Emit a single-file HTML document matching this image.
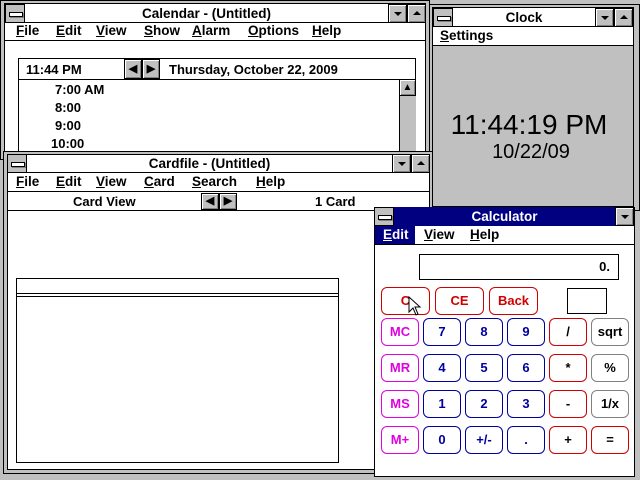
<!DOCTYPE html>
<html><head><style>
*{margin:0;padding:0;box-sizing:border-box}
body{width:640px;height:480px;background:#c0c0c0;position:relative;overflow:hidden;font-family:"Liberation Sans",sans-serif;font-weight:bold;font-size:13px;color:#000}
.a{position:absolute}
.w{background:#fff}
.b{border:1px solid #000}
.t{text-align:center;line-height:17px}
.btn{position:absolute;background:#c0c0c0;border:1px solid #000;box-shadow:inset 1px 1px #fff,inset -1px -1px #808080}
.tri{position:absolute;left:5px;width:0;height:0;border-left:4px solid transparent;border-right:4px solid transparent}
.dn{top:7px;border-top:4px solid #000}
.up{top:6px;border-bottom:4px solid #000}
.sys{position:absolute;background:#c0c0c0;border:1px solid #000}
.sys:after{content:"";position:absolute;left:3px;top:7px;width:12px;height:3px;background:#fff;border:1px solid #000;box-shadow:1px 1px #808080}
u{text-decoration:underline}
.m span{position:absolute;top:0;line-height:18px;font-weight:bold}
.k{position:absolute;width:38px;height:28px;border:1px solid;border-radius:6px;text-align:center;line-height:26px;font-size:13px;background:#fff}
.r{color:#d00000;border-color:#d00000}.bl{color:#0000a0;border-color:#0000a0}.p{color:#e000e0;border-color:#e000e0}.g{color:#000;border-color:#808080}
.ar{font-size:11px;text-align:center}
</style></head><body>

<!-- Calendar -->
<div class="a b" style="left:0;top:0;width:430px;height:160px;background:#c0c0c0"></div>
<div class="a b w" style="left:4px;top:3px;width:422px;height:150px"></div>
<div class="sys" style="left:5px;top:4px;width:20px;height:19px"></div>
<div class="a t" style="left:25px;top:4px;width:363px;height:19px;border-bottom:1px solid #000;line-height:19px;font-size:13.5px">Calendar - (Untitled)</div>
<div class="btn" style="left:388px;top:4px;width:19px;height:19px"><div class="tri dn"></div></div>
<div class="btn" style="left:407px;top:4px;width:19px;height:19px"><div class="tri up"></div></div>
<div class="a" style="left:4px;top:22px;width:422px;height:19px;border-bottom:1px solid #000"></div>
<div class="m a" style="left:0;top:22px;font-size:13.5px">
<span style="left:16px"><u>F</u>ile</span><span style="left:56px"><u>E</u>dit</span><span style="left:96px"><u>V</u>iew</span><span style="left:144px"><u>S</u>how</span><span style="left:192px"><u>A</u>larm</span><span style="left:248px"><u>O</u>ptions</span><span style="left:312px"><u>H</u>elp</span></div>
<div class="a b" style="left:18px;top:58px;width:398px;height:100px"></div>
<div class="a" style="left:19px;top:79px;width:396px;border-top:1px solid #000"></div>
<div class="a" style="left:26px;top:61px;line-height:17px">11:44 PM</div>
<div class="btn ar" style="left:124px;top:59px;width:18px;height:20px;line-height:18px">◀</div>
<div class="btn ar" style="left:142px;top:59px;width:18px;height:20px;line-height:18px">▶</div>
<div class="a" style="left:169px;top:61px;line-height:17px">Thursday, October 22, 2009</div>
<div class="a" style="left:399px;top:80px;width:17px;height:78px;background:#c0c0c0;border-left:1px solid #000"></div>
<div class="btn" style="left:399px;top:79px;width:17px;height:17px;font-size:10px;text-align:center;line-height:15px">▲</div>
<div class="a" style="left:55px;top:81px;line-height:17px">7:00 AM</div>
<div class="a" style="left:55px;top:99px;line-height:17px">8:00</div>
<div class="a" style="left:55px;top:117px;line-height:17px">9:00</div>
<div class="a" style="left:51px;top:135px;line-height:17px">10:00</div>

<!-- Clock -->
<div class="a b" style="left:429px;top:4px;width:211px;height:207px;background:#c0c0c0"></div>
<div class="a b" style="left:432px;top:7px;width:202px;height:200px"></div>
<div class="sys" style="left:433px;top:8px;width:20px;height:19px"></div>
<div class="a t w" style="left:453px;top:8px;width:142px;height:19px;border-bottom:1px solid #000;line-height:19px;font-size:13.5px">Clock</div>
<div class="btn" style="left:595px;top:8px;width:19px;height:19px"><div class="tri dn"></div></div>
<div class="btn" style="left:614px;top:8px;width:19px;height:19px"><div class="tri up"></div></div>
<div class="a w" style="left:433px;top:27px;width:200px;height:19px;border-bottom:1px solid #000;line-height:18px;padding-left:7px;font-size:13.5px"><u>S</u>ettings</div>
<div class="a" style="left:429px;top:108px;width:200px;text-align:center;font-weight:normal;font-size:28px;line-height:34px">11:44:19 PM</div>
<div class="a" style="left:431px;top:140px;width:200px;text-align:center;font-weight:normal;font-size:20px;line-height:24px">10/22/09</div>

<!-- Cardfile -->
<div class="a b" style="left:3px;top:151px;width:430px;height:323px;background:#c0c0c0"></div>
<div class="a b w" style="left:7px;top:154px;width:423px;height:316px"></div>
<div class="sys" style="left:7px;top:154px;width:20px;height:19px"></div>
<div class="a t" style="left:27px;top:154px;width:365px;height:19px;border-bottom:1px solid #000;line-height:19px;font-size:13.5px">Cardfile - (Untitled)</div>
<div class="btn" style="left:392px;top:154px;width:19px;height:19px"><div class="tri dn"></div></div>
<div class="btn" style="left:411px;top:154px;width:19px;height:19px"><div class="tri up"></div></div>
<div class="a" style="left:7px;top:173px;width:423px;height:19px;border-bottom:1px solid #000"></div>
<div class="m a" style="left:0;top:173px;font-size:13.5px">
<span style="left:16px"><u>F</u>ile</span><span style="left:56px"><u>E</u>dit</span><span style="left:96px"><u>V</u>iew</span><span style="left:144px"><u>C</u>ard</span><span style="left:192px"><u>S</u>earch</span><span style="left:256px"><u>H</u>elp</span></div>
<div class="a" style="left:7px;top:192px;width:423px;height:19px;border-bottom:1px solid #000"></div>
<div class="a" style="left:73px;top:193px;line-height:17px">Card View</div>
<div class="btn ar" style="left:201px;top:193px;width:18px;height:17px;line-height:15px">◀</div>
<div class="btn ar" style="left:219px;top:193px;width:18px;height:17px;line-height:15px">▶</div>
<div class="a" style="left:315px;top:193px;line-height:17px">1 Card</div>
<div class="a b" style="left:16px;top:278px;width:323px;height:185px"></div>
<div class="a" style="left:17px;top:293px;width:321px;height:4px;border-top:1px solid #000;border-bottom:1px solid #000"></div>

<!-- Calculator -->
<div class="a b w" style="left:374px;top:207px;width:261px;height:270px"></div>
<div class="sys" style="left:374px;top:207px;width:20px;height:19px"></div>
<div class="a t" style="left:394px;top:207px;width:221px;height:19px;background:#000080;color:#fff;line-height:19px;font-size:13.5px">Calculator</div>
<div class="btn" style="left:615px;top:207px;width:19px;height:19px"><div class="tri dn"></div></div>
<div class="a" style="left:375px;top:226px;width:259px;height:19px;border-bottom:1px solid #000"></div>
<div class="a" style="left:375px;top:226px;width:40px;height:18px;background:#000080"></div>
<div class="m a" style="left:0;top:226px;font-size:13.5px"><span style="left:383px;color:#fff"><u>E</u>dit</span><span style="left:424px"><u>V</u>iew</span><span style="left:470px"><u>H</u>elp</span></div>
<div class="a b" style="left:419px;top:254px;width:200px;height:26px;text-align:right;padding-right:8px;line-height:24px">0.</div>
<div class="a b" style="left:567px;top:288px;width:40px;height:26px"></div>
<div class="k r" style="left:381px;top:287px;width:49px">C</div>
<div class="k r" style="left:435px;top:287px;width:49px">CE</div>
<div class="k r" style="left:489px;top:287px;width:49px">Back</div>

<div class="k p" style="left:381px;top:318px">MC</div><div class="k bl" style="left:423px;top:318px">7</div><div class="k bl" style="left:465px;top:318px">8</div><div class="k bl" style="left:507px;top:318px">9</div><div class="k r" style="left:549px;top:318px;color:#000">/</div><div class="k g" style="left:591px;top:318px">sqrt</div>
<div class="k p" style="left:381px;top:354px">MR</div><div class="k bl" style="left:423px;top:354px">4</div><div class="k bl" style="left:465px;top:354px">5</div><div class="k bl" style="left:507px;top:354px">6</div><div class="k r" style="left:549px;top:354px;color:#000">*</div><div class="k g" style="left:591px;top:354px">%</div>
<div class="k p" style="left:381px;top:390px">MS</div><div class="k bl" style="left:423px;top:390px">1</div><div class="k bl" style="left:465px;top:390px">2</div><div class="k bl" style="left:507px;top:390px">3</div><div class="k r" style="left:549px;top:390px;color:#000">-</div><div class="k g" style="left:591px;top:390px">1/x</div>
<div class="k p" style="left:381px;top:426px">M+</div><div class="k bl" style="left:423px;top:426px">0</div><div class="k bl" style="left:465px;top:426px">+/-</div><div class="k bl" style="left:507px;top:426px">.</div><div class="k r" style="left:549px;top:426px;color:#000">+</div><div class="k r" style="left:591px;top:426px;color:#000">=</div>

<svg class="a" style="left:408px;top:296px" width="14" height="22" viewBox="0 0 14 22"><path d="M1 1 L1 16 L5 12 L8 19 L10 18 L7 11 L12 11 Z" fill="#fff" stroke="#000" stroke-width="1"/></svg>
</body></html>
